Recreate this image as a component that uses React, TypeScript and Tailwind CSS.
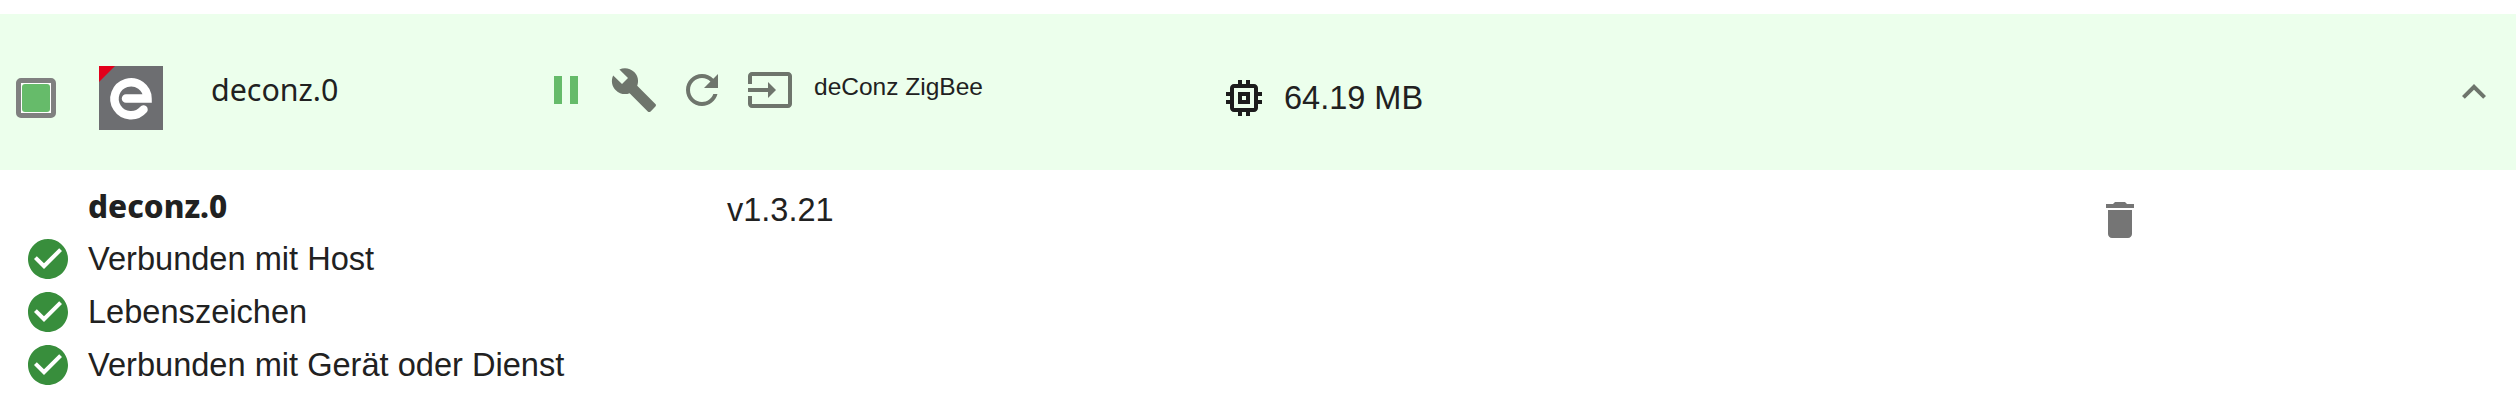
import React from "react";

const ICONS = {
  pause: "M6 19h4V5H6v14zm8-14v14h4V5h-4z",
  build:
    "M22.7 19l-9.1-9.1c.9-2.3.4-5-1.5-6.9-2-2-5-2.4-7.4-1.3L9 6 6 9 1.6 4.7C.4 7.1.9 10.1 2.9 12.1c1.9 1.9 4.6 2.4 6.9 1.5l9.1 9.1c.4.4 1 .4 1.4 0l2.3-2.3c.5-.4.5-1.1.1-1.4z",
  refresh:
    "M17.65 6.35C16.2 4.9 14.21 4 12 4c-4.42 0-7.99 3.58-7.99 8s3.57 8 7.99 8c3.73 0 6.84-2.55 7.73-6h-2.08c-.82 2.33-3.04 4-5.65 4-3.31 0-6-2.69-6-6s2.69-6 6-6c1.66 0 3.14.69 4.22 1.78L13 11h7V4l-2.35 2.35z",
  input:
    "M21 3.01H3c-1.1 0-2 .9-2 2V9h2V4.99h18v14.03H3V15H1v4.01c0 1.1.9 1.98 2 1.98h18c1.1 0 2-.88 2-1.98v-14c0-1.11-.9-2-2-2zM11 16l4-4-4-4v3H1v2h10v3z",
  memory:
    "M15 9H9v6h6V9zm-2 4h-2v-2h2v2zm8-2V9h-2V7c0-1.1-.9-2-2-2h-2V3h-2v2h-2V3H9v2H7c-1.1 0-2 .9-2 2v2H3v2h2v2H3v2h2v2c0 1.1.9 2 2 2h2v2h2v-2h2v2h2v-2h2c1.1 0 2-.9 2-2v-2h2v-2h-2v-2h2zm-4 6H7V7h10v10z",
  expandLess: "M12 8l-6 6 1.41 1.41L12 10.83l4.59 4.58L18 14z",
  trash: "M6 19c0 1.1.9 2 2 2h8c1.1 0 2-.9 2-2V7H6v12zM19 4h-3.5l-1-1h-5l-1 1H5v2h14V4z",
  check:
    "M12 2C6.48 2 2 6.48 2 12s4.48 10 10 10 10-4.48 10-10S17.52 2 12 2zm-2 15l-5-5 1.41-1.41L10 14.17l7.59-7.59L19 8l-9 9z",
};

function Icon({ d, className }: { d: string; className: string }) {
  return (
    <svg viewBox="0 0 24 24" fill="currentColor" className={className}>
      <path d={d} />
    </svg>
  );
}

function DeconzLogo() {
  return (
    <svg viewBox="0 0 64 64" className="h-16 w-16 shrink-0">
      <rect width="64" height="64" fill="#6d6e71" />
      <path d="M0 0H16L0 16Z" fill="#e2001a" />
      <path
        d="M27 32.5H48.5A16.5 16.5 0 1 0 44.5 43.5"
        fill="none"
        stroke="#fff"
        strokeWidth="8.5"
        strokeLinecap="round"
      />
    </svg>
  );
}

const statusRows = ["Verbunden mit Host", "Lebenszeichen", "Verbunden mit Gerät oder Dienst"];

export default function App() {
  return (
    <div className="h-[420px] w-[2516px] overflow-hidden bg-white pt-[14px] font-['Liberation_Sans',sans-serif] text-[#212121]">
      {/* Kopfzeile */}
      <div className="flex h-[156px] items-center bg-[#ecffec]">
        <div className="ml-4 mt-3 flex h-10 w-10 shrink-0 items-center justify-center rounded-[5px] border-[5px] border-[#808080] bg-white">
          <div className="h-7 w-7 rounded-[3px] bg-[#66bb6a]" />
        </div>
        <div className="ml-[43px] mt-3">
          <DeconzLogo />
        </div>
        <div className="mb-[4px] ml-[48px] w-[331px] font-['Noto_Sans',sans-serif] text-[30.4px] leading-10">
          deconz.0
        </div>
        <div className="mb-1 flex w-[678px] items-center gap-5 text-[#6e756c]">
          <Icon d={ICONS.pause} className="h-12 w-12 text-[#66bb6a]" />
          <Icon d={ICONS.build} className="h-12 w-12" />
          <Icon d={ICONS.refresh} className="h-12 w-12" />
          <Icon d={ICONS.input} className="h-12 w-12" />
          <span className="mb-[6px] text-[24.5px] leading-8 text-[#212121]">deConz ZigBee</span>
        </div>
        <div className="mt-[11px] flex items-center">
          <Icon d={ICONS.memory} className="h-12 w-12 text-[#1c1c1c]" />
          <span className="ml-4 text-[32.5px] leading-10">64.19 MB</span>
        </div>
        <div className="ml-auto mr-[18px] text-[#6e756c]">
          <Icon d={ICONS.expandLess} className="h-12 w-12" />
        </div>
      </div>

      {/* Details */}
      <div className="flex">
        <div className="w-[727px] shrink-0 pt-4">
          <div className="ml-[88px] h-[53px] font-['Noto_Sans',sans-serif] text-[31.5px] font-extrabold leading-10">
            deconz.0
          </div>
          <div className="flex flex-col gap-[13px]">
            {statusRows.map((label) => (
              <div key={label} className="flex h-10 items-center">
                <svg viewBox="2 2 20 20" className="ml-[28px] h-10 w-10 shrink-0 text-[#388e3c]">
                  <path d={ICONS.check} fill="currentColor" />
                </svg>
                <span className="ml-[20px] text-[32.6px] leading-10">{label}</span>
              </div>
            ))}
          </div>
        </div>
        <div className="w-[1369px] shrink-0 pt-[20px] text-[32.5px] leading-10">v1.3.21</div>
        <div className="pt-[26px] text-[#757575]">
          <Icon d={ICONS.trash} className="h-12 w-12" />
        </div>
      </div>
    </div>
  );
}
